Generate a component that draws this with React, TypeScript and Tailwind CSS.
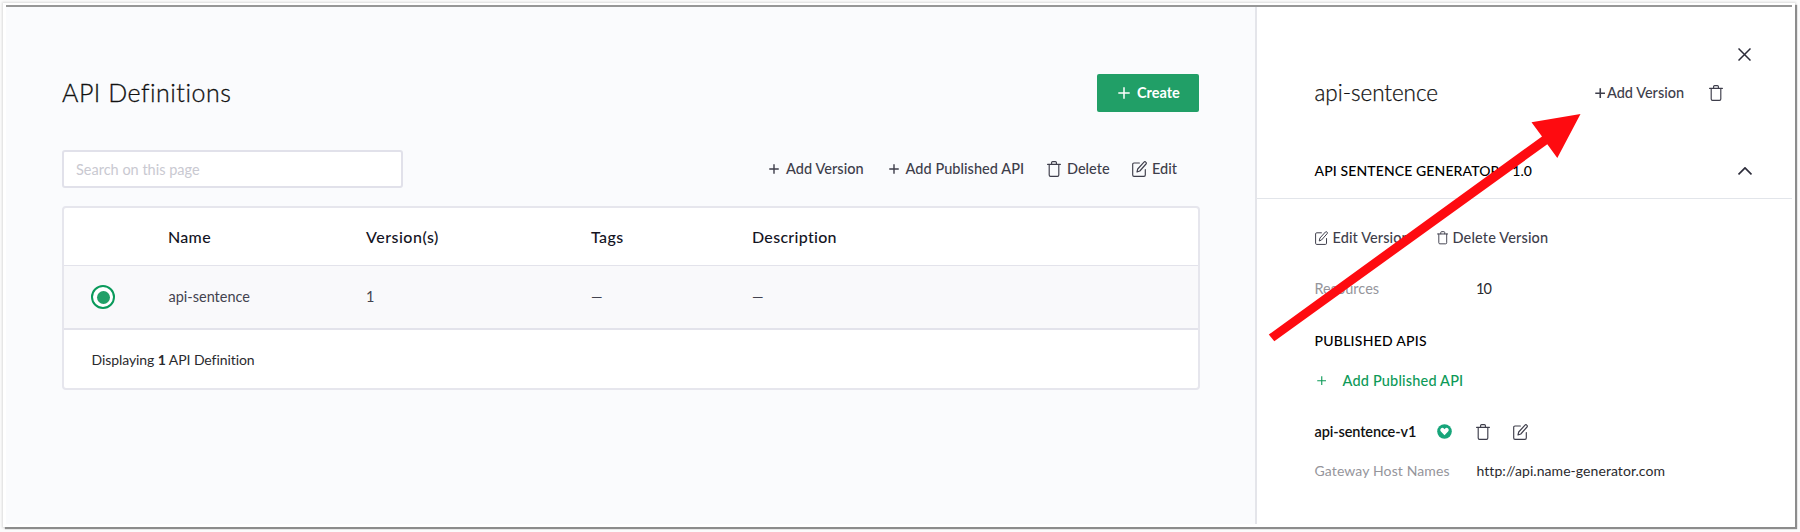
import React from 'react';

type IconProps = { className?: string };

function Plus({ className = '' }: IconProps) {
  return (
    <svg className={className} viewBox="0 0 12 12" fill="none" stroke="currentColor">
      <path d="M6 0.3V11.7M0.3 6H11.7" />
    </svg>
  );
}

function Trash({ className = '' }: IconProps) {
  return (
    <svg className={className} viewBox="0 0 14 16" fill="none" stroke="currentColor" strokeWidth="1.15" strokeLinecap="round" strokeLinejoin="round">
      <path d="M0.6 3.4H13.4M2.2 3.4V14.1a1.3 1.3 0 0 0 1.3 1.3h7a1.3 1.3 0 0 0 1.3-1.3V3.4M4.6 3.2V1.6a1 1 0 0 1 1-1h2.8a1 1 0 0 1 1 1v1.6" />
    </svg>
  );
}

function Edit({ className = '' }: IconProps) {
  return (
    <svg className={className} viewBox="0 0 15 16" fill="none" stroke="currentColor" strokeWidth="1.15" strokeLinecap="round" strokeLinejoin="round">
      <path d="M7.4 2H2A1.3 1.3 0 0 0 .7 3.3v10.8a1.3 1.3 0 0 0 1.3 1.3h10a1.3 1.3 0 0 0 1.3-1.3V8.6" />
      <path d="M5 11l.7-3L12 1.1a1.2 1.2 0 0 1 1.8 0l.2.2a1.2 1.2 0 0 1 0 1.7L7.8 10z" />
    </svg>
  );
}

function Action({ icon, label, className = '' }: { icon: React.ReactNode; label: string; className?: string }) {
  return (
    <button className={`flex shrink-0 items-center whitespace-nowrap ${className}`}>
      {icon}
      <span>{label}</span>
    </button>
  );
}

function Definitions() {
  return (
    <main className="w-[1249px] shrink-0 bg-[#fafbfd] pl-[56px] pt-[67px]">
      <div className="flex h-[38px] w-[1137px] items-center justify-between">
        <h1 className="text-[25px] font-light tracking-[0.5px] text-[#111] [-webkit-text-stroke:0.3px_#111]">API Definitions</h1>
        <button className="flex h-[38px] w-[102px] items-center rounded-[2px] bg-[#219f67] pl-[21px] text-[14.5px] font-bold text-white">
          <Plus className="mr-[7px] h-3 w-3 stroke-[1.5]" />
          <span>Create</span>
        </button>
      </div>

      <div className="mt-[38px] flex h-[38px] w-[1137px] items-center">
        <input
          placeholder="Search on this page"
          className="h-[38px] w-[341px] rounded-[3px] border-2 border-[#e1e1ea] bg-white px-3 text-[14.5px] placeholder:text-[#c9c9d1]"
        />
        <div className="ml-[366px] flex items-center text-[14.5px] font-medium text-[#3e3e4b]">
          <Action className="w-[119.5px] tracking-[0.06px]" icon={<Plus className="mr-[7px] h-[10px] w-[10px] stroke-[1.7]" />} label="Add Version" />
          <Action className="w-[158.5px] tracking-[0.05px]" icon={<Plus className="mr-[7px] h-[10px] w-[10px] stroke-[1.7]" />} label="Add Published API" />
          <Action className="w-[84.5px]" icon={<Trash className="mr-[6px] h-4 w-[14px]" />} label="Delete" />
          <Action icon={<Edit className="mr-[5.5px] h-4 w-[15px]" />} label="Edit" />
        </div>
      </div>

      <div className="mt-[18px] w-[1138px] overflow-hidden rounded-[4px] border-2 border-[#e6e6ed] bg-white">
        <div className="flex h-[57px] items-center pl-[104px] text-[16px] font-medium text-[#14141f]">
          <span className="w-[198px] tracking-[0.3px]">Name</span>
          <span className="w-[225px] tracking-[0.5px]">Version(s)</span>
          <span className="w-[161px] tracking-[0.4px]">Tags</span>
          <span className="tracking-[0.3px]">Description</span>
        </div>
        <div className="flex h-[65px] items-center border-y border-b-2 border-[#e3e3eb] bg-[#f9f9fb] pl-[27px] text-[14.5px] text-[#43434f]">
          <span className="mr-[53.5px] flex h-[24px] w-[24px] shrink-0 items-center justify-center rounded-full border-2 border-[#0a9a5b] bg-white">
            <span className="h-[13px] w-[13px] rounded-full bg-[#219f67]" />
          </span>
          <span className="w-[197.5px]">api-sentence</span>
          <span className="w-[225px]">1</span>
          <span className="w-[161px]">—</span>
          <span>—</span>
        </div>
        <div className="flex h-[58px] items-center pl-[27.5px] text-[14px] tracking-[-0.08px] text-[#2a2a2e]">
          <span>
            Displaying <b>1</b> API Definition
          </span>
        </div>
      </div>
    </main>
  );
}

function Details() {
  return (
    <aside className="flex w-[537px] flex-col border-l-2 border-[#e4e5ea] bg-white">
      <div className="mt-[35px] flex h-6 items-center justify-end pr-[41px]">
        <svg className="h-[13px] w-[13px] text-[#2c2c3a]" viewBox="0 0 13 13" fill="none" stroke="currentColor" strokeWidth="1.5">
          <path d="M0.5 0.5L12.5 12.5M12.5 0.5L0.5 12.5" />
        </svg>
      </div>

      <div className="mt-[7px] flex h-10 items-center pl-[57.5px] text-[#3e3e4b]">
        <h2 className="w-[280px] text-[22.5px] font-light tracking-[-0.05px] text-[#111] [-webkit-text-stroke:0.25px_#111]">api-sentence</h2>
        <Action
          className="w-[114px] text-[14.5px] font-medium"
          icon={<Plus className="mr-[2px] h-[10.5px] w-[10.5px] stroke-[1.8]" />}
          label="Add Version"
        />
        <Trash className="h-4 w-[14px]" />
      </div>

      <div className="mt-[30px] flex h-[56px] items-center justify-between border-b border-[#e2e5ea] pl-[57.5px] pr-[40px]">
        <h3 className="text-[14px] font-medium tracking-[0.12px] text-black">API SENTENCE GENERATOR - 1.0</h3>
        <svg className="h-[8px] w-[14px] text-[#2c2c3a]" viewBox="0 0 14 8" fill="none" stroke="currentColor" strokeWidth="1.7">
          <path d="M0.5 7.4L7 0.9L13.5 7.4" />
        </svg>
      </div>

      <div className="pl-[57.5px]">
        <div className="mt-[27px] flex h-6 items-center text-[14.5px] font-medium text-[#3e3e4b]">
          <Action className="w-[122px] tracking-[0.1px]" icon={<Edit className="mr-[5px] h-[14px] w-[13px]" />} label="Edit Version" />
          <Action className="tracking-[0.15px]" icon={<Trash className="mr-[4.5px] h-[13.5px] w-[11.5px]" />} label="Delete Version" />
        </div>

        <div className="mt-[27px] flex h-[23px] items-center text-[14.5px]">
          <span className="w-[161.5px] text-[#95959b]">Resources</span>
          <span className="tracking-[-1px] text-[#2a2a2e]">10</span>
        </div>

        <h3 className="mt-[28px] flex h-[25px] items-center text-[14px] font-medium tracking-[0.25px] text-black">PUBLISHED APIS</h3>

        <Action
          className="mt-[15px] h-[25px] pl-[2px] text-[14.5px] font-medium tracking-[0.18px] text-[#0d9a58]"
          icon={<Plus className="mr-[16.5px] h-[9.5px] w-[9.5px] stroke-[1.4]" />}
          label="Add Published API"
        />

        <div className="mt-[26px] flex h-[25px] items-center text-[#3e3e4b]">
          <span className="w-[122.5px] text-[14.5px] font-semibold tracking-[-0.12px] text-[#111]">api-sentence-v1</span>
          <svg className="mr-[24px] h-[15px] w-[15px]" viewBox="0 0 15 15">
            <circle cx="7.5" cy="7.5" r="7.3" fill="#17a57a" />
            <path fill="#fff" d="M7.5 11.3L3.9 7.6a2.1 2.1 0 0 1 3-3l.6.6.6-.6a2.1 2.1 0 0 1 3 3z" />
          </svg>
          <Trash className="mr-[23px] h-4 w-[14px]" />
          <Edit className="h-4 w-[15px]" />
        </div>

        <div className="mt-[14px] flex h-6 items-center text-[14px]">
          <span className="w-[162px] tracking-[0.12px] text-[#95959b]">Gateway Host Names</span>
          <span className="tracking-[0.06px] text-[#2a2a2e]">http://api.name-generator.com</span>
        </div>
      </div>
    </aside>
  );
}

export default function App() {
  return (
    <div className="relative h-[532px] w-[1800px] overflow-hidden bg-[#fbfbfb] pl-[3px] pt-[3px] font-['Lato',sans-serif]">
      <div className="h-[524px] w-[1792px] bg-white pl-[3px] pt-[2px] shadow-[2px_2px_1px_#8c8c8c,0_0_2px_1px_#dcdcdc]">
        <div className="flex h-[519px] w-[1786px] border-t-2 border-[#979797]">
          <Definitions />
          <Details />
        </div>
      </div>
      <svg className="pointer-events-none absolute left-0 top-0 h-[532px] w-[1800px]" viewBox="0 0 1800 532">
        <polygon fill="#fe0b10" points="1580.5,114 1531.5,122.3 1542,136.5 1268.8,334.5 1274.3,341.3 1547.3,144.3 1557.3,158" />
      </svg>
    </div>
  );
}
